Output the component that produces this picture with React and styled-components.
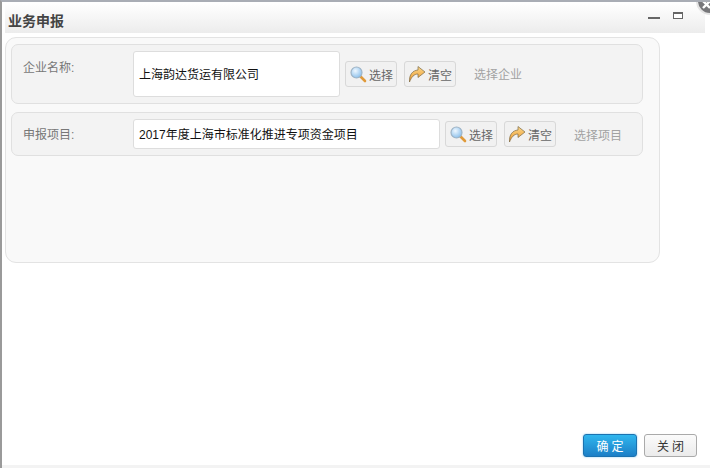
import React from 'react'
import styled, { createGlobalStyle } from 'styled-components'

const Global = createGlobalStyle`
  html, body { margin: 0; padding: 0; background: #fff; overflow: hidden; }
  body { font-family: "Liberation Sans", "Noto Sans CJK SC", sans-serif; }
`

const Dialog = styled.div`
  position: relative;
  width: 710px;
  height: 468px;
  box-sizing: border-box;
  border-top: 2px solid #a9adb5;
  border-left: 2px solid #9a9a9a;
  padding: 1px 5px 0 3px;
  display: flex;
  flex-direction: column;
  background: #fff;
  overflow: hidden;
`

const Header = styled.div`
  height: 30px;
  flex: none;
  display: flex;
  align-items: center;
  justify-content: space-between;
  background: linear-gradient(#ffffff, #ececec);
  padding: 4px 22px 0 3px;
  box-sizing: border-box;
`

const Title = styled.h1`
  margin: 0;
  font-size: 14px;
  font-weight: bold;
  color: #444;
`

const WinTools = styled.div`
  display: flex;
  align-items: flex-start;
  gap: 13px;
  margin-top: -10px;
`

const MinIcon = styled.span`
  display: block;
  width: 12px;
  height: 2px;
  margin-top: 5px;
  background: #666;
`

const MaxIcon = styled.span`
  display: block;
  width: 10px;
  height: 7px;
  box-sizing: border-box;
  border: 1px solid #666;
  border-top-width: 2px;
  background: #fff;
`

const CloseBtn = styled.div`
  position: absolute;
  top: -15px;
  right: -14px;
  width: 28px;
  height: 28px;
  border-radius: 50%;
  background: #77777a;
  border: 2px solid #e4e4e4;
  box-sizing: border-box;
`

const Body = styled.div`
  flex: 1;
  padding-top: 4px;
`

const Panel = styled.div`
  width: 655px;
  height: 226px;
  box-sizing: border-box;
  border: 1px solid #e3e3e3;
  border-radius: 11px;
  background: #f9f9f9;
  padding: 6px 16px 0 5px;
  display: flex;
  flex-direction: column;
  gap: 8px;
`

const Row = styled.div`
  height: ${p => p.$h}px;
  box-sizing: border-box;
  border: 1px solid #e0e0e0;
  border-radius: 7px;
  background: #f3f3f3;
  display: flex;
  align-items: ${p => p.$top ? 'flex-start' : 'center'};
  padding: ${p => p.$top ? 6 : 0}px 0 0 11px;
`

const Label = styled.label`
  width: 110px;
  flex: none;
  font-size: 12px;
  line-height: 16px;
  color: #777;
  margin-top: ${p => p.$top ? 9 : 1}px;
`

const Field = styled.div`
  width: ${p => p.$w}px;
  height: ${p => p.$h}px;
  flex: none;
  box-sizing: border-box;
  border: 1px solid #ddd;
  border-radius: 3px;
  background: #fff;
  padding: 0 0 2px 5px;
  display: flex;
  align-items: center;
  font-size: 12px;
  color: #111;
`

const Actions = styled.div`
  display: flex;
  align-items: center;
  gap: 7px;
  margin-left: 5px;
  margin-top: ${p => p.$top ? 10 : 0}px;
`

const ToolBtn = styled.button`
  width: 52px;
  height: 26px;
  box-sizing: border-box;
  padding: 0 0 0 3px;
  border: 1px solid #d8d8d8;
  border-radius: 3px;
  background: #f1f1f1;
  display: flex;
  align-items: center;
  gap: 2px;
  font: inherit;
  font-size: 12px;
  color: #666;
`

const Hint = styled.span`
  margin-left: 18px;
  margin-top: ${p => p.$top ? 14 : 0}px;
  font-size: 12px;
  color: #a2a2a2;
`

const Footer = styled.div`
  flex: none;
  height: 31px;
  display: flex;
  justify-content: flex-end;
  gap: 7px;
  padding-right: 13px;
  margin-right: -5px;
  margin-left: -3px;
  border-bottom: 3px solid #f3f3f3;
`

const DlgBtn = styled.button`
  width: ${p => p.$primary ? 54 : 53}px;
  height: 23px;
  box-sizing: border-box;
  padding: 0;
  border-radius: 3px;
  border: 1px solid ${p => p.$primary ? '#1b72b0' : '#aaa'};
  background: ${p => p.$primary ? 'linear-gradient(#2fb6ee, #1c7fc7)' : 'linear-gradient(#fbfbfb, #ebebeb)'};
  box-shadow: ${p => p.$primary ? '0 0 2px #7cc4ee' : 'none'};
  color: ${p => p.$primary ? '#fff' : '#333'};
  font: inherit;
  font-size: 12px;
  letter-spacing: 3px;
  text-indent: 3px;
`

const SearchIcon = () => (
  <svg width="18" height="18" viewBox="0 0 18 18">
    <defs>
      <radialGradient id="lens" cx="0.4" cy="0.35" r="0.7">
        <stop offset="0" stopColor="#eef7ff" />
        <stop offset="1" stopColor="#86bdea" />
      </radialGradient>
    </defs>
    <line x1="11" y1="11" x2="16" y2="16" stroke="#e09a3a" strokeWidth="2.6" strokeLinecap="round" />
    <circle cx="7.5" cy="7.5" r="5.5" fill="url(#lens)" stroke="#9fb4c6" strokeWidth="1.2" />
  </svg>
)

const RedoIcon = () => (
  <svg width="18" height="18" viewBox="0 0 18 18">
    <defs>
      <linearGradient id="arrow" x1="0" y1="0" x2="0" y2="1">
        <stop offset="0" stopColor="#fcd98c" />
        <stop offset="1" stopColor="#ec9628" />
      </linearGradient>
    </defs>
    <path d="M1.5 17 C1 9 5 5.5 10 5 L10 1.5 L17 7 L10 12.5 L10 9 C6 9 3.5 12 1.5 17 Z" fill="url(#arrow)" stroke="#7d6a45" strokeWidth="0.7" strokeLinejoin="round" />
  </svg>
)

const CloseMark = () => (
  <svg width="24" height="24" viewBox="0 0 24 24">
    <path d="M5 12 L12 19 M12 12 L5 19" stroke="#fff" strokeWidth="2.4" />
  </svg>
)

const ButtonGroup = ({ top }) => (
  <Actions $top={top}>
    <ToolBtn><SearchIcon />选择</ToolBtn>
    <ToolBtn><RedoIcon />清空</ToolBtn>
  </Actions>
)

const App = () => {
  return (
    <>
      <Global />
      <Dialog>
        <Header>
          <Title>业务申报</Title>
          <WinTools>
            <MinIcon />
            <MaxIcon />
          </WinTools>
        </Header>
        <CloseBtn><CloseMark /></CloseBtn>
        <Body>
          <Panel>
            <Row $h={60} $top>
              <Label $top>企业名称:</Label>
              <Field $w={207} $h={46}>上海韵达货运有限公司</Field>
              <ButtonGroup top />
              <Hint $top>选择企业</Hint>
            </Row>
            <Row $h={44}>
              <Label>申报项目:</Label>
              <Field $w={307} $h={30}>2017年度上海市标准化推进专项资金项目</Field>
              <ButtonGroup />
              <Hint>选择项目</Hint>
            </Row>
          </Panel>
        </Body>
        <Footer>
          <DlgBtn $primary>确定</DlgBtn>
          <DlgBtn>关闭</DlgBtn>
        </Footer>
      </Dialog>
    </>
  )
}

export default App
